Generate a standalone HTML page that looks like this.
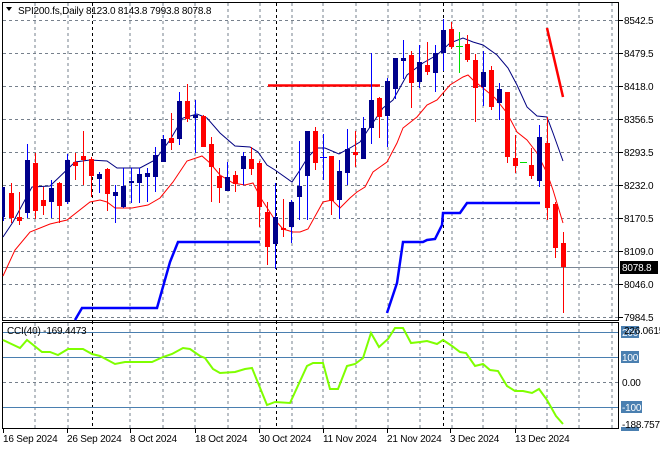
<!DOCTYPE html>
<html><head><meta charset="utf-8"><style>
html,body{margin:0;padding:0;background:#fff;width:660px;height:450px;overflow:hidden}
svg{display:block}
text{font-family:"Liberation Sans",sans-serif;font-size:10.5px;fill:#000}
.d{font-size:10px;letter-spacing:-0.2px}
</style></head><body>
<svg width="660" height="450" viewBox="0 0 660 450" xmlns="http://www.w3.org/2000/svg">
<rect width="660" height="450" fill="#fff"/>
<g stroke="#76808c" stroke-width="1" stroke-dasharray="3,3" fill="none">
<path d="M35 3V319M68 3V319M130 3V319M163 3V319M195 3V319M228 3V319M260 3V319M292 3V319M323 3V319M356 3V319M388 3V319M420 3V319M452 3V319M483 3V319M516 3V319M547 3V319M579 3V319M612 3V319"/>
<path d="M35 323V428M68 323V428M130 323V428M163 323V428M195 323V428M228 323V428M260 323V428M292 323V428M323 323V428M356 323V428M388 323V428M420 323V428M452 323V428M483 323V428M516 323V428M547 323V428M579 323V428M612 323V428"/>
<path d="M3 20.5H618M3 53.5H618M3 86.5H618M3 119.5H618M3 152.5H618M3 185.5H618M3 218.5H618M3 251.5H618M3 284.5H618M3 317.5H618M3 382.5H618"/>
</g>
<g stroke="#000" stroke-dasharray="3,3"><path d="M92.5 3V428M276.5 3V428M443.5 3V428"/></g>
<path d="M3 267.5H618" stroke="#7a8796"/>
<g stroke="#4a7fb0"><path d="M3 332.5H618M3 357.5H618M3 407.5H618"/></g>
<rect x="2.5" y="2.5" width="616" height="318" fill="none" stroke="#000"/>
<rect x="2.5" y="322.5" width="616" height="106" fill="none" stroke="#000"/>
<polyline fill="none" stroke="#0000ff" stroke-width="2.5" points="75,320 82,308 157,308 170,262 178,242 260,242"/>
<polyline fill="none" stroke="#0000ff" stroke-width="2.5" points="387,313 397,283 403,242 423,242 427,240 435,239 442,225 443,213 460,213 467,203 540,203"/>
<path d="M268 85.5H380" stroke="#ff0000" stroke-width="2.5"/>
<path d="M547 28L563 97" stroke="#ff0000" stroke-width="2.5"/>
<polyline fill="none" stroke="#000080" stroke-width="1" points="3,237 13,222 32,187 50,186 75,162 90,160 107,161 117,168 140,168 155,160 170,140 183,118 197,114 207,118 220,133 235,146 250,147 258,152 267,165 275,170 292,182 300,170 308,157 317,148 325,148 339,154 350,148 360,142 370,127 383,108 393,100 407,75 423,63 437,55 450,43 463,38 473,42 483,45 497,55 508,68 517,85 527,107 537,116 547,117 553,133 563,161"/>
<polyline fill="none" stroke="#ff0000" stroke-width="1" points="3,276 15,250 30,232 50,224 67,220 90,202 100,200 107,202 115,208 132,208 148,205 160,198 173,182 187,161 202,156 210,163 220,175 233,183 245,185 253,183 262,200 275,220 283,229 293,232 300,232 308,229 323,202 332,200 340,208 350,198 357,192 365,187 373,172 387,162 397,143 403,128 417,117 427,105 437,100 450,85 463,77 468,75 473,80 483,88 495,98 507,113 517,132 527,140 537,153 547,173 553,190 563,223"/>
<polyline fill="none" stroke="#7fff00" stroke-width="2" points="3,340 20,348 27,340 42,352 50,352 58,355 68,349 83,349 92,354 100,356 115,364 125,362 152,362 163,357 172,354 183,348 190,349 200,356 205,358 213,369 220,373 235,372 245,369 252,368 267,405 275,402 290,403 307,366 313,363 323,363 330,389 338,389 347,366 355,364 363,358 371,333 379,347 388,339 395,328 403,328 411,343 420,342 427,341 437,344 443,340 452,346 460,352 466,353 475,366 483,364 490,370 498,371 507,386 515,391 523,391 532,393 539,389 547,400 556,416 563,424"/>
<path d="M6 7H12L9 11Z" fill="#000"/>
<text x="18" y="14" class="d">SPI200.fs,Daily  8123.0 8143.8 7993.8 8078.8</text>
<text x="7" y="334" class="d">CCI(40) -169.4473</text>
<path d="M619 20.5h4M619 53.5h4M619 86.5h4M619 119.5h4M619 152.5h4M619 185.5h4M619 218.5h4M619 251.5h4M619 284.5h4M619 317.5h4" stroke="#000"/>
<g class="d">
<text x="624" y="24" class="d">8542.5</text>
<text x="624" y="57" class="d">8479.5</text>
<text x="624" y="90" class="d">8418.0</text>
<text x="624" y="123" class="d">8356.5</text>
<text x="624" y="156" class="d">8293.5</text>
<text x="624" y="189" class="d">8232.0</text>
<text x="624" y="222" class="d">8170.5</text>
<text x="624" y="255" class="d">8109.0</text>
<rect x="620" y="261" width="38" height="13" fill="#000"/>
<text x="622" y="271" class="d" style="fill:#fff">8078.8</text>
<text x="624" y="288" class="d">8046.0</text>
<text x="624" y="321" class="d">7984.5</text>
<rect x="621" y="326" width="18" height="12" fill="#4a7fb0"/>
<text x="622" y="336" class="d" style="fill:#fff">200</text>
<text x="624" y="334" class="d">226.0615</text>
<rect x="621" y="351" width="18" height="12" fill="#4a7fb0"/>
<text x="622" y="361" class="d" style="fill:#fff">100</text>
<text x="622" y="386" class="d">0.00</text>
<rect x="621" y="401" width="21" height="12" fill="#4a7fb0"/>
<text x="622" y="411" class="d" style="fill:#fff">-100</text>
<rect x="621" y="427" width="18" height="4" fill="#4a7fb0"/>
<text x="622" y="428" class="d">-188.757</text>
</g>
<path d="M3.5 429v4M67.5 429v4M130.5 429v4M195.5 429v4M259.5 429v4M323.5 429v4M387.5 429v4M450.5 429v4M515.5 429v4" stroke="#000"/>
<text x="3" y="442" class="d">16 Sep 2024</text>
<text x="67" y="442" class="d">26 Sep 2024</text>
<text x="130" y="442" class="d">8 Oct 2024</text>
<text x="195" y="442" class="d">18 Oct 2024</text>
<text x="259" y="442" class="d">30 Oct 2024</text>
<text x="323" y="442" class="d">11 Nov 2024</text>
<text x="387" y="442" class="d">21 Nov 2024</text>
<text x="450" y="442" class="d">3 Dec 2024</text>
<text x="515" y="442" class="d">13 Dec 2024</text>
<g stroke-width="1">
<path stroke="#0000ff" d="M3.5 187V221"/><rect x="2" y="187" width="3" height="30" fill="#00008b"/>
<path stroke="#ff0000" d="M11.5 183V223"/><rect x="9" y="193" width="5" height="25" fill="#f00"/>
<path stroke="#ff0000" d="M19.5 192V225"/><rect x="17" y="217" width="5" height="4" fill="#f00"/>
<path stroke="#0000ff" d="M27.5 144V218"/><rect x="25" y="160" width="5" height="53" fill="#00008b"/>
<path stroke="#ff0000" d="M35.5 153V219"/><rect x="33" y="163" width="5" height="48" fill="#f00"/>
<path stroke="#ff0000" d="M43.5 187V215"/><rect x="41" y="200" width="5" height="6" fill="#f00"/>
<path stroke="#0000ff" d="M51.5 180V218"/><rect x="49" y="188" width="5" height="14" fill="#00008b"/>
<path stroke="#ff0000" d="M59.5 182V223"/><rect x="57" y="183" width="5" height="23" fill="#f00"/>
<path stroke="#0000ff" d="M67.5 154V204"/><rect x="65" y="160" width="5" height="42" fill="#00008b"/>
<path stroke="#ff0000" d="M75.5 153V180"/><rect x="73" y="162" width="5" height="4" fill="#f00"/>
<path stroke="#ff0000" d="M83.5 131V185"/><rect x="81" y="156" width="5" height="4" fill="#f00"/>
<path stroke="#ff0000" d="M91.5 157V197"/><rect x="89" y="159" width="5" height="17" fill="#f00"/>
<path stroke="#0000ff" d="M99.5 172V193"/><rect x="97" y="174" width="5" height="5" fill="#00008b"/>
<path stroke="#ff0000" d="M107.5 168V211"/><rect x="105" y="169" width="5" height="25" fill="#f00"/>
<path stroke="#0000ff" d="M115.5 185V223"/><rect x="113" y="192" width="5" height="4" fill="#00008b"/>
<path stroke="#0000ff" d="M123.5 168V208"/><rect x="121" y="186" width="5" height="21" fill="#00008b"/>
<path stroke="#0000ff" d="M131.5 168V203"/><rect x="129" y="181" width="5" height="2" fill="#00008b"/>
<path stroke="#0000ff" d="M139.5 168V203"/><rect x="137" y="174" width="5" height="9" fill="#00008b"/>
<path stroke="#0000ff" d="M147.5 168V202"/><rect x="145" y="173" width="5" height="4" fill="#00008b"/>
<path stroke="#0000ff" d="M155.5 147V192"/><rect x="153" y="155" width="5" height="22" fill="#00008b"/>
<path stroke="#0000ff" d="M163.5 135V162"/><rect x="161" y="139" width="5" height="23" fill="#00008b"/>
<path stroke="#ff0000" d="M171.5 113V150"/><rect x="169" y="138" width="5" height="5" fill="#f00"/>
<path stroke="#0000ff" d="M179.5 92V145"/><rect x="177" y="101" width="5" height="38" fill="#00008b"/>
<path stroke="#ff0000" d="M187.5 84V122"/><rect x="185" y="101" width="5" height="18" fill="#f00"/>
<path stroke="#0000ff" d="M195.5 100V153"/><rect x="193" y="115" width="5" height="3" fill="#00008b"/>
<path stroke="#ff0000" d="M203.5 115V147"/><rect x="201" y="116" width="5" height="31" fill="#f00"/>
<path stroke="#ff0000" d="M211.5 137V202"/><rect x="209" y="144" width="5" height="23" fill="#f00"/>
<path stroke="#ff0000" d="M219.5 168V203"/><rect x="217" y="176" width="5" height="12" fill="#f00"/>
<path stroke="#0000ff" d="M227.5 162V191"/><rect x="225" y="177" width="5" height="14" fill="#00008b"/>
<path stroke="#ff0000" d="M235.5 171V192"/><rect x="233" y="175" width="5" height="9" fill="#f00"/>
<path stroke="#0000ff" d="M243.5 152V185"/><rect x="241" y="156" width="5" height="13" fill="#00008b"/>
<path stroke="#ff0000" d="M251.5 147V175"/><rect x="249" y="159" width="5" height="10" fill="#f00"/>
<path stroke="#ff0000" d="M259.5 161V227"/><rect x="257" y="163" width="5" height="44" fill="#f00"/>
<path stroke="#ff0000" d="M267.5 202V265"/><rect x="265" y="212" width="5" height="35" fill="#f00"/>
<path stroke="#0000ff" d="M275.5 183V269"/><rect x="273" y="217" width="5" height="27" fill="#00008b"/>
<path stroke="#ff0000" d="M283.5 199V237"/><rect x="281" y="228" width="5" height="2" fill="#f00"/>
<path stroke="#0000ff" d="M291.5 200V243"/><rect x="289" y="202" width="5" height="25" fill="#00008b"/>
<path stroke="#0000ff" d="M299.5 141V220"/><rect x="297" y="186" width="5" height="11" fill="#00008b"/>
<path stroke="#0000ff" d="M307.5 131V220"/><rect x="305" y="131" width="5" height="45" fill="#00008b"/>
<path stroke="#ff0000" d="M315.5 127V170"/><rect x="313" y="131" width="5" height="32" fill="#f00"/>
<path stroke="#0000ff" d="M323.5 134V180M320 157.5H327"/>
<path stroke="#ff0000" d="M331.5 156V215"/><rect x="329" y="156" width="5" height="45" fill="#f00"/>
<path stroke="#0000ff" d="M339.5 160V219"/><rect x="337" y="171" width="5" height="29" fill="#00008b"/>
<path stroke="#0000ff" d="M347.5 129V185"/><rect x="345" y="149" width="5" height="24" fill="#00008b"/>
<path stroke="#ff0000" d="M355.5 131V167"/><rect x="353" y="152" width="5" height="3" fill="#f00"/>
<path stroke="#0000ff" d="M363.5 117V159"/><rect x="361" y="128" width="5" height="31" fill="#00008b"/>
<path stroke="#0000ff" d="M371.5 53V144"/><rect x="369" y="100" width="5" height="28" fill="#00008b"/>
<path stroke="#ff0000" d="M379.5 97V138"/><rect x="377" y="98" width="5" height="19" fill="#f00"/>
<path stroke="#0000ff" d="M387.5 78V147"/><rect x="385" y="81" width="5" height="35" fill="#00008b"/>
<path stroke="#0000ff" d="M395.5 58V99"/><rect x="393" y="58" width="5" height="31" fill="#00008b"/>
<path stroke="#0000ff" d="M403.5 40V79"/><rect x="401" y="58" width="5" height="3" fill="#00008b"/>
<path stroke="#ff0000" d="M411.5 51V108"/><rect x="409" y="55" width="5" height="28" fill="#f00"/>
<path stroke="#0000ff" d="M419.5 45V88"/><rect x="417" y="62" width="5" height="20" fill="#00008b"/>
<path stroke="#ff0000" d="M427.5 42V75"/><rect x="425" y="65" width="5" height="7" fill="#f00"/>
<path stroke="#0000ff" d="M435.5 45V92"/><rect x="433" y="53" width="5" height="20" fill="#00008b"/>
<path stroke="#0000ff" d="M443.5 19V71"/><rect x="441" y="30" width="5" height="23" fill="#00008b"/>
<path stroke="#ff0000" d="M451.5 22V49"/><rect x="449" y="29" width="5" height="18" fill="#f00"/>
<path stroke="#00dd00" d="M459.5 32V73M456 46.5H463"/>
<path stroke="#ff0000" d="M467.5 35V62"/><rect x="465" y="44" width="5" height="16" fill="#f00"/>
<path stroke="#ff0000" d="M475.5 54V122"/><rect x="473" y="60" width="5" height="28" fill="#f00"/>
<path stroke="#0000ff" d="M483.5 51V106"/><rect x="481" y="72" width="5" height="15" fill="#00008b"/>
<path stroke="#ff0000" d="M491.5 66V110"/><rect x="489" y="70" width="5" height="37" fill="#f00"/>
<path stroke="#0000ff" d="M499.5 83V120"/><rect x="497" y="89" width="5" height="14" fill="#00008b"/>
<path stroke="#ff0000" d="M507.5 92V163"/><rect x="505" y="92" width="5" height="65" fill="#f00"/>
<path stroke="#ff0000" d="M515.5 135V173"/><rect x="513" y="158" width="5" height="8" fill="#f00"/>
<path stroke="#00dd00" d="M520 162.5H527"/>
<path stroke="#ff0000" d="M531.5 148V179"/><rect x="529" y="165" width="5" height="11" fill="#f00"/>
<path stroke="#0000ff" d="M539.5 125V187"/><rect x="537" y="137" width="5" height="44" fill="#00008b"/>
<path stroke="#ff0000" d="M547.5 117V220"/><rect x="545" y="143" width="5" height="65" fill="#f00"/>
<path stroke="#ff0000" d="M555.5 202V258"/><rect x="553" y="204" width="5" height="44" fill="#f00"/>
<path stroke="#ff0000" d="M563.5 232V313"/><rect x="561" y="243" width="5" height="24" fill="#f00"/>
</g>
</svg>
</body></html>
